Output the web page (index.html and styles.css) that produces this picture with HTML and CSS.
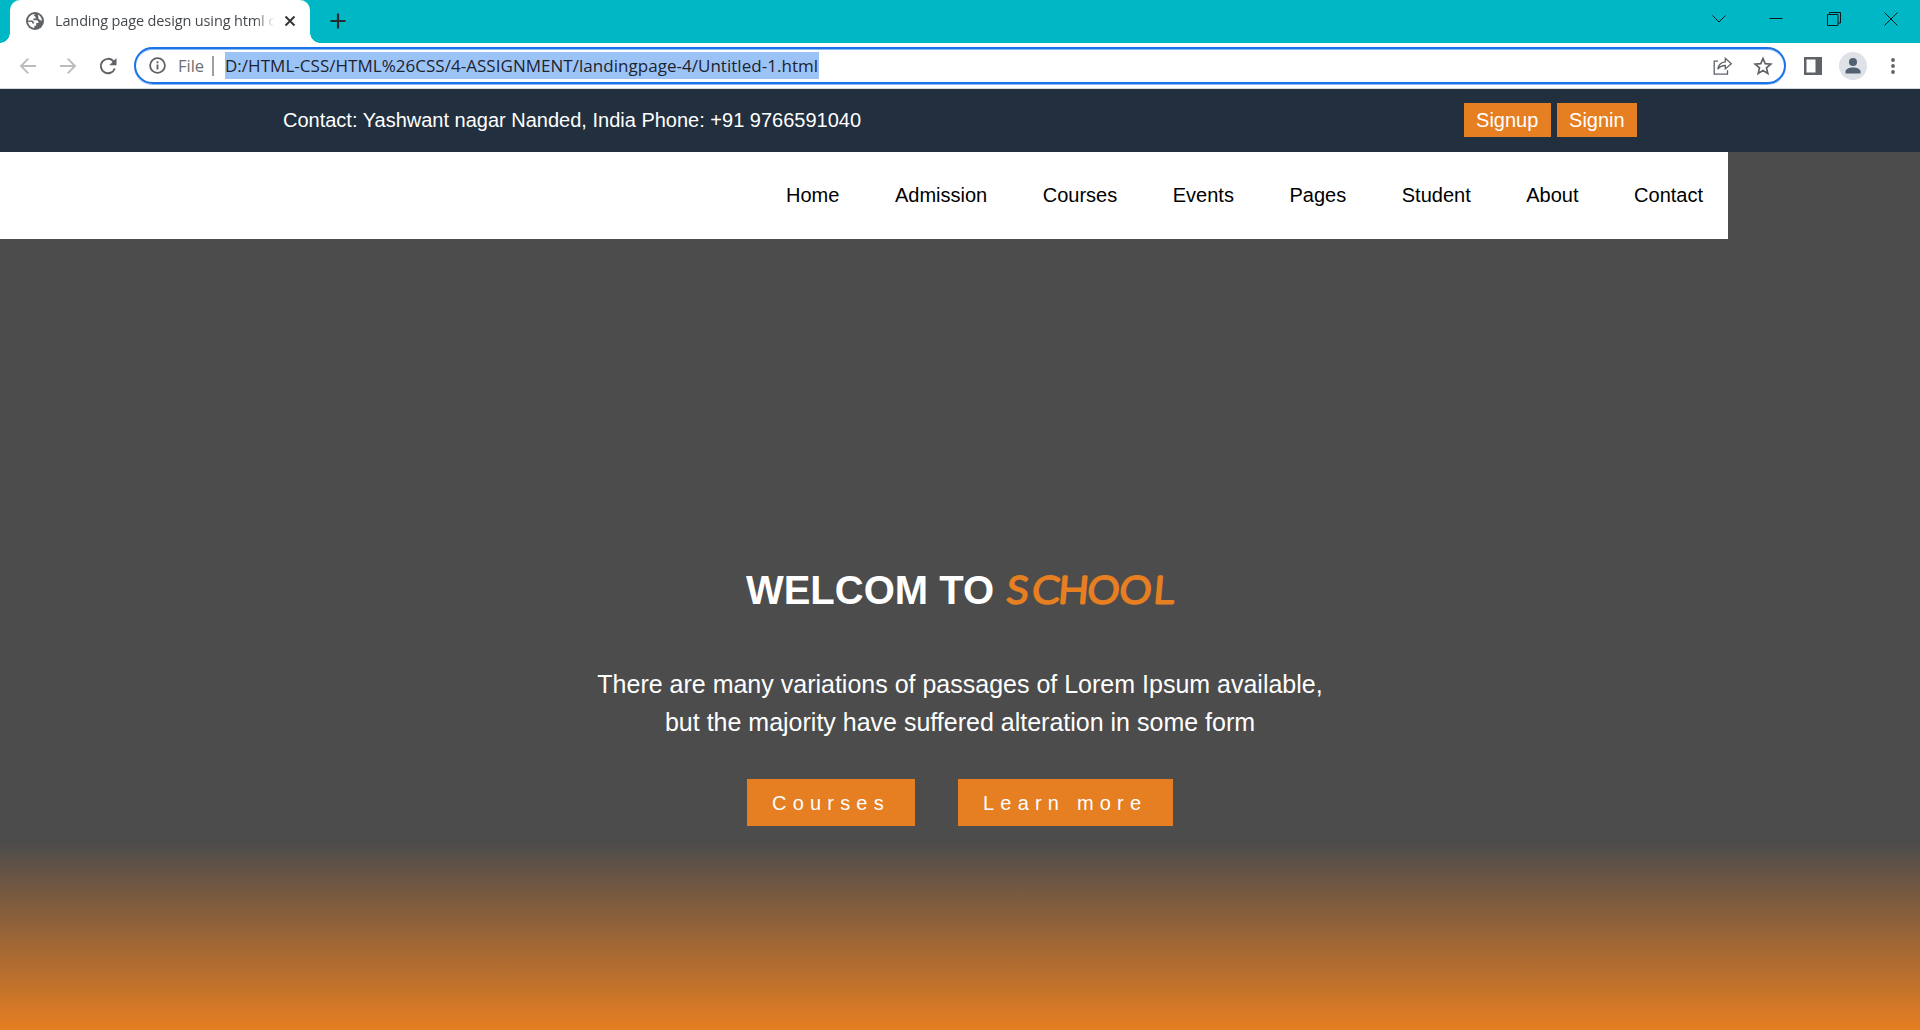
FILE: index.html
```html
<!DOCTYPE html>
<html lang="en">
<head>
<meta charset="utf-8">
<title>Landing page design using html</title>
<link rel="stylesheet" href="styles.css">
</head>
<body>
<div class="tabstrip">
  <div class="tab">
    <svg class="globe" width="18" height="18" viewBox="0 0 18 18"><circle cx="9" cy="9" r="9" fill="#5f6368"/><path d="M2 8.500C2.200 5 5 2 8.800 2L8 3.700 9.700 5v1.600H7.400v1.700h3.300c1.500 0 1.800 1.500 1.800 2.600h-2.300v2.800H8.400v2.200C5 15.600 2.300 13 2 9.800l4.200.2v1.600h1.900V9.900L6.300 8.500zM11.800 2.600c2.400 1 4.100 3.300 4.200 6.200l-2.200-.8-1.500-1.700V4.500z" fill="#fff"/></svg>
    <span class="tab-title">Landing page design using html c</span>
    <svg class="tab-close" width="12" height="12" viewBox="0 0 12 12"><path d="M1.500 1.500 10.500 10.500M10.500 1.500 1.500 10.500" stroke="#333639" stroke-width="2"/></svg>
  </div>
  <svg class="new-tab" width="16" height="16" viewBox="0 0 16 16"><path d="M8 .5v15M.5 8h15" stroke="#202c30" stroke-width="2.200"/></svg>
  <div class="window-buttons">
    <svg width="14" height="14" viewBox="0 0 14 14"><path d="M.5 3.500 7 10 13.500 3.500"/></svg>
    <svg width="14" height="14" viewBox="0 0 14 14"><path d="M.5 6.500h13"/></svg>
    <svg width="14" height="14" viewBox="0 0 14 14"><path d="M.5 2.500h10.500v11H.5zM2.500 2.500v-2h11v10.500H11"/></svg>
    <svg width="14" height="14" viewBox="0 0 14 14"><path d="M.5.5l13 13M13.500.5l-13 13"/></svg>
  </div>
</div>
<div class="toolbar">
  <div class="nav-icons">
    <svg width="18" height="18" viewBox="0 0 18 18"><path d="M17 9H2M9.300 1.700 2 9l7.300 7.300" stroke="#babcbe"/></svg>
    <svg width="18" height="18" viewBox="0 0 18 18"><path d="M1 9h15M8.700 1.700 16 9l-7.300 7.300" stroke="#babcbe"/></svg>
    <svg width="18" height="18" viewBox="0 0 18 18"><path d="M15.800 11.500A7.200 7.200 0 1 1 14.200 4L16 6" stroke="#5f6368"/><path d="M17.500 1v7.200h-7.200z" fill="#5f6368"/></svg>
  </div>
  <div class="omnibox">
    <svg class="info" width="17" height="17" viewBox="0 0 17 17"><circle cx="8.500" cy="8.500" r="7.400" fill="none" stroke="#5f6368" stroke-width="1.800"/><path d="M8.500 7.600v5M8.500 4.200v2" stroke="#5f6368" stroke-width="1.900"/></svg>
    <span class="scheme">File</span>
    <span class="divider"></span>
    <span class="url">D:/HTML-CSS/HTML%26CSS/4-ASSIGNMENT/landingpage-4/Untitled-1.html</span>
    <svg class="share" width="20" height="18" viewBox="0 0 20 18"><path d="M5 4.200H1.200v13h13.300v-4M4.800 12.200C5.500 7.500 8 5.200 12.300 4.900V1.300l6 5.400-6 5.200V8.500C9 8.500 6.600 9.600 4.800 12.200z" fill="none" stroke="#5f6368" stroke-width="1.300"/></svg>
    <svg class="star" width="20" height="20" viewBox="0 0 20 20"><path d="M10 2.500l2.200 5.200 5.600.5-4.300 3.700 1.300 5.500L10 14.500l-4.800 2.900 1.300-5.500L2.200 8.200l5.600-.5z" fill="none" stroke="#5f6368" stroke-width="1.700"/></svg>
  </div>
  <svg class="panel" width="18" height="18" viewBox="0 0 18 18"><path d="M0 0h18v18H0zM2.500 2.500v13H11.500v-13z" fill="#5f6368" fill-rule="evenodd"/></svg>
  <svg class="avatar" width="28" height="28" viewBox="0 0 28 28"><circle cx="14" cy="14" r="14" fill="#dee1e6"/><circle cx="14" cy="10" r="4" fill="#526073"/><path d="M6.500 21.500v-2c0-2.500 4-4 7.500-4s7.500 1.500 7.500 4v2z" fill="#526073"/></svg>
  <svg class="menu" width="4" height="16" viewBox="0 0 4 16"><g fill="#5f6368"><circle cx="2" cy="2" r="1.900"/><circle cx="2" cy="8" r="1.900"/><circle cx="2" cy="14" r="1.900"/></g></svg>
</div>
<main class="page">
  <header class="topbar">
    <span class="contact">Contact: Yashwant nagar Nanded, India Phone: +91 9766591040</span>
    <div class="auth"><a class="auth-btn">Signup</a><a class="auth-btn">Signin</a></div>
  </header>
  <nav class="main-nav">
    <a>Home</a><a>Admission</a><a>Courses</a><a>Events</a><a>Pages</a><a>Student</a><a>About</a><a>Contact</a>
  </nav>
  <section class="hero">
    <h1 class="headline"><span>WELCOM TO</span>
      <svg class="school" width="176" height="46" viewBox="0 0 176 46"><text transform="translate(0 35.500) skewX(-5) scale(1.080 1)" x="3.800 27.300 51.500 78.500 108.200 139.500" y="0">SCHOOL</text></svg>
    </h1>
    <p class="lead">There are many variations of passages of Lorem Ipsum available,<br>but the majority have suffered alteration in some form</p>
    <div class="actions"><a class="cta cta-courses">Courses</a><a class="cta cta-more">Learn more</a></div>
  </section>
</main>
</body>
</html>
```
FILE: styles.css
```css
* { box-sizing: border-box; }
body {
  margin: 0;
  height: 1030px;
  overflow: hidden;
  display: flex;
  flex-direction: column;
  font-family: "Liberation Sans", Arial, sans-serif;
  font-size: 20px;
}
svg { display: block; flex: none; }

/* browser tab strip */
.tabstrip {
  height: 43px;
  flex: none;
  display: flex;
  align-items: flex-start;
  padding-left: 10px;
  background: #00b7c6;
}
.tab {
  position: relative;
  width: 300px;
  height: 43px;
  display: flex;
  align-items: center;
  padding: 0 14px 1px 16px;
  border-radius: 10px 10px 0 0;
  background: #fff;
}
.tab::before, .tab::after {
  content: "";
  position: absolute;
  bottom: 0;
  width: 10px;
  height: 10px;
}
.tab::before { left: -10px; background: radial-gradient(circle at 0 0, transparent 9.500px, #fff 10px); }
.tab::after { right: -10px; background: radial-gradient(circle at 100% 0, transparent 9.500px, #fff 10px); }
.tab-title {
  width: 220px;
  margin-left: 11px;
  overflow: hidden;
  white-space: nowrap;
  font: 14.500px/24px "Open Sans", "Noto Sans", sans-serif;
  letter-spacing: -0.130px;
  color: #45494d;
  -webkit-mask-image: linear-gradient(90deg, #000 200px, transparent 220px);
  mask-image: linear-gradient(90deg, #000 200px, transparent 220px);
}
.tab-close { margin-left: 9px; }
.new-tab { margin: 13px 0 0 20px; }
.window-buttons { display: flex; gap: 43.500px; margin: 12px 22px 0 auto; }
.window-buttons path { fill: none; stroke: #0b1a1c; stroke-width: 1; }

/* browser toolbar */
.toolbar {
  height: 46px;
  flex: none;
  display: flex;
  align-items: center;
  border-bottom: 1px solid #d5d7da;
  padding-right: 25.500px;
  background: #fff;
}
.nav-icons { display: flex; gap: 22px; width: 134px; padding-left: 18.500px; }
.nav-icons path:first-child { fill: none; stroke-width: 1.900; }
.omnibox {
  width: 1652px;
  height: 37px;
  display: flex;
  align-items: center;
  padding: 0 11px 0 13px;
  border: 2px solid #1a73e8;
  border-radius: 19px;
  box-shadow: 0 1px #8cb8f3, inset 0 1px #8cb8f3;
  font: 17px/27px "Open Sans", "Noto Sans", sans-serif;
}
.scheme { width: 26px; margin-left: 12px; color: #6b6f74; font-size: 16.500px; }
.divider { width: 2px; height: 20px; margin: 0 11px 0 8px; background: #9c9fa3; }
.url { background: #9cc3f6; color: #1d2430; white-space: nowrap; width: 594px; letter-spacing: 0.030px; }
.share { margin-left: auto; }
.star { margin-left: 20px; }
.panel { margin-left: 18px; }
.avatar { margin-left: 17px; }
.menu { margin-left: auto; }

/* landing page */
.page {
  flex: 1;
  display: flex;
  flex-direction: column;
  color: #fff;
  background: linear-gradient(0deg, #e67e22 0, #4c4c4c 188px);
}
.topbar {
  height: 63px;
  flex: none;
  display: flex;
  align-items: center;
  justify-content: space-between;
  padding: 0 283px;
  background: #222f3e;
}
.auth { display: flex; gap: 6px; margin-bottom: 2px; }
.auth-btn { height: 34px; padding: 0 12.350px; line-height: 35px; background: #e67e22; }
.main-nav {
  width: 1728px;
  height: 87px;
  flex: none;
  display: flex;
  align-items: center;
  justify-content: flex-end;
  gap: 55.560px;
  padding-right: 25px;
  background: #fff;
  color: #000;
}
.hero { display: flex; flex-direction: column; align-items: center; padding-top: 322px; }
.headline { display: flex; height: 58px; margin: 0 0 0 4px; align-items: center; gap: 8px; font-size: 40px; line-height: 58px; }
.school text {
  font-family: Lato, sans-serif;
  font-weight: 300;
  font-size: 37px;
  fill: #e67e22;
  stroke: #e67e22;
  stroke-width: 3px;
  stroke-linejoin: round;
}
.lead { margin: 46px 0 0; font-size: 25px; line-height: 38px; text-align: center; }
.actions { display: flex; gap: 43px; margin-top: 38px; }
.cta { height: 47px; padding-left: 25px; line-height: 48px; letter-spacing: 6.200px; background: #e67e22; }
.cta-courses { width: 168px; }
.cta-more { width: 215px; }
```
